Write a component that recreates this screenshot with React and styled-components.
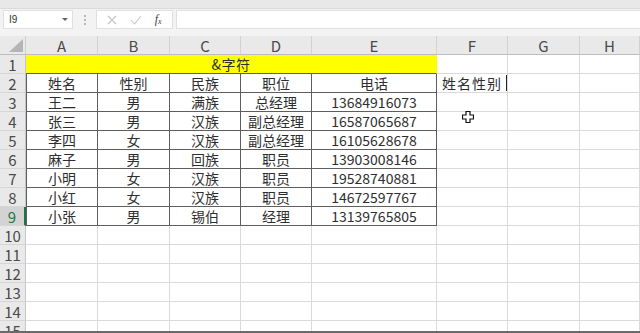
import React from 'react';
import styled, { createGlobalStyle } from 'styled-components';

const GlobalStyle = createGlobalStyle`
  html, body {
    margin: 0;
    padding: 0;
    background: #ffffff;
  }
  body {
    font-family: "Noto Sans CJK SC", "Noto Sans", sans-serif;
  }
`;

const COLUMNS = ['A', 'B', 'C', 'D', 'E', 'F', 'G', 'H'];

const TABLE = [
  ['姓名', '性别', '民族', '职位', '电话'],
  ['王二', '男', '满族', '总经理', '13684916073'],
  ['张三', '男', '汉族', '副总经理', '16587065687'],
  ['李四', '女', '汉族', '副总经理', '16105628678'],
  ['麻子', '男', '回族', '职员', '13903008146'],
  ['小明', '女', '汉族', '职员', '19528740881'],
  ['小红', '女', '汉族', '职员', '14672597767'],
  ['小张', '男', '锡伯', '经理', '13139765805'],
];

const SELECTED_ROW = 9;
const LAST_ROW = 15;

const Window = styled.div`
  width: 640px;
  height: 333px;
  overflow: hidden;
  display: flex;
  flex-direction: column;
  position: relative;
  background: #ffffff;
`;

const RibbonEdge = styled.div`
  height: 8px;
  background: #e8e8e8;
  border-bottom: 1px solid #dadada;
`;

const FormulaBar = styled.div`
  height: 27px;
  box-sizing: border-box;
  background: #f3f3f3;
  display: flex;
  align-items: flex-start;
  padding: 1px 0 0 3px;
`;

const NameBox = styled.div`
  width: 70px;
  height: 19px;
  box-sizing: border-box;
  background: #ffffff;
  border: 1px solid #e0e0e0;
  display: flex;
  align-items: center;
  justify-content: space-between;
  padding: 0 4px 0 5px;
  font-family: "Liberation Sans", Arial, sans-serif;
  font-size: 10px;
  color: #333;
`;

const DropArrow = styled.span`
  width: 0;
  height: 0;
  border-left: 3px solid transparent;
  border-right: 3px solid transparent;
  border-top: 3px solid #666;
`;

const Grip = styled.div`
  width: 23px;
  height: 19px;
  display: flex;
  flex-direction: column;
  align-items: center;
  justify-content: center;
  gap: 2px;

  span {
    width: 2px;
    height: 2px;
    background: #b8b8b8;
  }
`;

const FuncBox = styled.div`
  width: 77px;
  height: 19px;
  box-sizing: border-box;
  background: #ffffff;
  border: 1px solid #e0e0e0;
  display: flex;
  align-items: center;
  justify-content: space-around;
  padding: 0 4px;
`;

const Fx = styled.span`
  font-family: "Liberation Serif", "Times New Roman", serif;
  font-style: italic;
  font-size: 12px;
  color: #444;

  sub {
    font-size: 8px;
    vertical-align: -1px;
  }
`;

const FormulaInput = styled.div`
  flex: 1;
  margin-left: 3px;
  height: 19px;
  box-sizing: border-box;
  background: #ffffff;
  border: 1px solid #e0e0e0;
  border-right: none;
`;

const Sheet = styled.div`
  flex: 1;
  overflow: hidden;
  position: relative;
  display: grid;
  grid-template-columns: 26px 72px 72px 71px 71px 125px 71px 72px 1fr;
  grid-auto-rows: 19px;
  align-content: start;
`;

const Corner = styled.div`
  background: #e9e9e9;
  border-right: 1px solid #cfcfcf;
  border-bottom: 1px solid #bdbdbd;
  position: relative;

  svg {
    position: absolute;
    right: 2px;
    bottom: 2px;
  }
`;

const ColHeader = styled.div`
  background: #e9e9e9;
  border-right: 1px solid #d2d2d2;
  border-bottom: 1px solid #bdbdbd;
  display: flex;
  align-items: center;
  justify-content: center;
  font-size: 15px;
  color: #4a4a4a;
`;

const RowHeader = styled.div`
  background: ${(p) => (p.$selected ? '#d3d3d3' : '#e9e9e9')};
  border-right: ${(p) => (p.$selected ? '2px solid #217346' : '1px solid #c6c6c6')};
  border-bottom: 1px solid #d6d6d6;
  display: flex;
  align-items: center;
  justify-content: center;
  font-size: 15px;
  color: ${(p) => (p.$selected ? '#217346' : '#4a4a4a')};
`;

const Cell = styled.div`
  box-sizing: border-box;
  border-right: 1px solid ${(p) => (p.$boxed ? '#5e5e5e' : '#dadada')};
  border-bottom: 1px solid ${(p) => (p.$boxed ? '#5e5e5e' : '#dadada')};
  border-left: ${(p) => (p.$edge ? '1px solid #5e5e5e' : 'none')};
  display: flex;
  align-items: center;
  justify-content: ${(p) => (p.$left ? 'flex-start' : 'center')};
  padding: ${(p) => (p.$left ? '0 0 0 5px' : '0')};
  font-size: 14px;
  color: #2e2e2e;
  white-space: nowrap;
  overflow: hidden;
`;

const TitleCell = styled(Cell)`
  grid-column: span 5;
  background: #ffff00;
  border-right-color: #ffff00;
  border-bottom-color: #5e5e5e;
  letter-spacing: 0.5px;
`;

const WideText = styled.span`
  letter-spacing: 1px;
`;

const Caret = styled.span`
  margin-left: auto;
  width: 1px;
  height: 16px;
  background: #222;
`;

const Pointer = styled.svg`
  position: absolute;
  left: 462px;
  top: 75px;
`;

const BottomEdge = styled.div`
  height: 2px;
  background: #6a6a6a;
`;

const CornerTriangle = () => (
  <svg width="14" height="13" viewBox="0 0 14 13">
    <polygon points="0,13 14,13 14,0" fill="#b5b5b5" />
  </svg>
);

const CancelIcon = () => (
  <svg width="10" height="10" viewBox="0 0 10 10">
    <path d="M1 1 L9 9 M9 1 L1 9" stroke="#c4c4c4" strokeWidth="1.1" fill="none" />
  </svg>
);

const EnterIcon = () => (
  <svg width="12" height="10" viewBox="0 0 12 10">
    <path d="M1 5 L4.5 9 L11 1" stroke="#c4c4c4" strokeWidth="1.1" fill="none" />
  </svg>
);

const CrossPointer = () => (
  <Pointer width="12" height="12" viewBox="0 0 12 12">
    <path
      d="M4 0.5 H8 V4 H11.5 V8 H8 V11.5 H4 V8 H0.5 V4 H4 Z"
      fill="#ffffff"
      stroke="#111"
      strokeWidth="1.2"
    />
  </Pointer>
);

const renderRow = (row) => {
  const cells = [];
  const selected = row === SELECTED_ROW;
  cells.push(
    <RowHeader key={`h${row}`} $selected={selected}>
      {row}
    </RowHeader>
  );

  if (row === 1) {
    cells.push(<TitleCell key="title">&amp;字符</TitleCell>);
    ['F', 'G', 'H'].forEach((c) => cells.push(<Cell key={`${c}1`} />));
    return cells;
  }

  const data = TABLE[row - 2];
  COLUMNS.forEach((col, i) => {
    const key = `${col}${row}`;
    if (data && i < 5) {
      cells.push(
        <Cell key={key} $boxed $edge={i === 0}>
          {data[i]}
        </Cell>
      );
    } else if (row === 2 && col === 'F') {
      cells.push(
        <Cell key={key} $left>
          <WideText>姓名性别</WideText>
          <Caret />
        </Cell>
      );
    } else {
      cells.push(<Cell key={key} />);
    }
  });
  return cells;
};

const App = () => {
  const rows = Array.from({ length: LAST_ROW }, (_, i) => i + 1);
  return (
    <Window>
      <GlobalStyle />
      <RibbonEdge />
      <FormulaBar>
        <NameBox>
          <span>I9</span>
          <DropArrow />
        </NameBox>
        <Grip>
          <span />
          <span />
          <span />
        </Grip>
        <FuncBox>
          <CancelIcon />
          <EnterIcon />
          <Fx>
            f<sub>x</sub>
          </Fx>
        </FuncBox>
        <FormulaInput />
      </FormulaBar>
      <Sheet>
        <Corner>
          <CornerTriangle />
        </Corner>
        {COLUMNS.map((c) => (
          <ColHeader key={c}>{c}</ColHeader>
        ))}
        {rows.map((r) => (
          <React.Fragment key={r}>{renderRow(r)}</React.Fragment>
        ))}
        <CrossPointer />
      </Sheet>
      <BottomEdge />
    </Window>
  );
};

export default App;
